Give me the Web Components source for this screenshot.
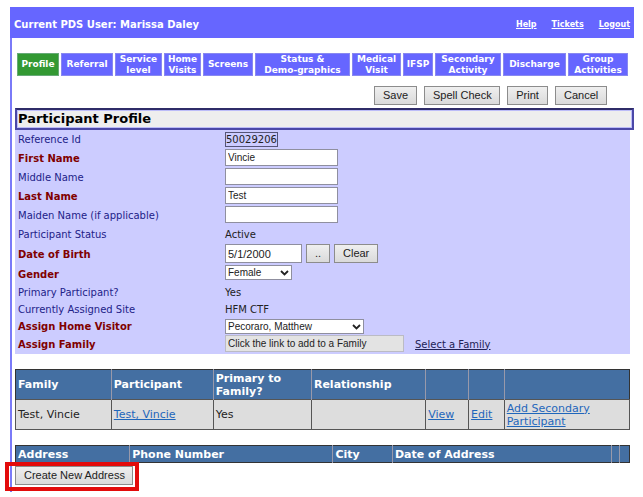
<!DOCTYPE html>
<html lang="en">
<head>
<meta charset="utf-8">
<title>Participant Profile</title>
<style>
  body { margin: 0; background: #fff; font-family: "DejaVu Sans", Verdana, sans-serif; font-size: 10px; color: #222; }
</style>
</head>
<body>
<pds-page></pds-page>

<script>
function define(name, html, setup) {
  const template = document.createElement('template');
  template.innerHTML = html;
  customElements.define(name, class extends HTMLElement {
    connectedCallback() {
      if (this.shadowRoot) return;
      const root = this.attachShadow({ mode: 'open' });
      root.append(template.content.cloneNode(true));
      if (setup) setup(this, root);
    }
  });
}

define('pds-header', `
  <style>
    :host { display: flex; align-items: center; justify-content: space-between; height: 31px; padding: 3px 4px 0; box-sizing: border-box; background: #6666ff; color: #fff; font-weight: bold; }
    nav { display: flex; gap: 15px; font-size: 8px; }
    a { color: inherit; }
  </style>
  <slot></slot>
  <nav><a href="#help">Help</a><a href="#tickets">Tickets</a><a href="#logout">Logout</a></nav>`);

define('pds-tabs', `
  <style>
    :host { display: grid; grid-template-columns: 42fr 52fr 47fr 37fr 50fr 95fr 49fr 30fr 66fr 63fr 60fr; gap: 2px; }
  </style>
  <slot></slot>`);

define('pds-tab', `
  <style>
    :host { display: block; min-width: 0; }
    a { display: flex; align-items: center; justify-content: center; height: 23px; box-sizing: border-box; border: 1px solid #8888f0; background: #6666ff; color: #fff; font-size: 9px; font-weight: bold; line-height: 11px; text-align: center; text-decoration: none; white-space: nowrap; }
    :host([current]) a { background: #339933; border-color: #66aa77; }
  </style>
  <a href="#"><span><slot></slot></span></a>`);

define('pds-button', `
  <style>
    :host { display: block; }
    button { display: block; width: 100%; height: 19px; box-sizing: border-box; margin: 0; padding: 0 8px; border: 1px solid #8c8c8c; border-radius: 0; background: linear-gradient(#efefef, #dadada); color: #222; font: 11px "Liberation Sans", Arial, sans-serif; line-height: 17px; white-space: nowrap; }
  </style>
  <button type="button"><slot></slot></button>`);

define('pds-title', `
  <style>
    :host { display: block; border: 2px solid #4b48a8; border-top-color: #2f2c68; background: #eeeeee; outline: 1px solid #bcbcf8; outline-offset: -3px; }
    h1 { margin: 0; padding: 0 1px; font-size: 13px; line-height: 18px; color: #000; }
  </style>
  <h1><slot></slot></h1>`);

define('pds-field', `
  <style>
    :host { display: grid; grid-template-columns: 207px 1fr; min-height: 19px; }
    :host([compact]) { min-height: 17px; }
    :host([tall]) { min-height: 20px; }
    label, .label { align-self: center; padding-left: 3px; padding-top: 1px; color: #222288; line-height: 14px; }
    :host([required]) label { color: #800000; font-weight: bold; }
    .value { display: flex; align-items: flex-start; gap: 4px; padding-left: 3px; }
    .static { align-self: center; line-height: 14px; }
    .ref { align-self: center; box-sizing: border-box; height: 15px; padding: 0; border: 1px solid #555577; line-height: 13px; }
    input, select { box-sizing: border-box; margin: 0; padding: 0 2px; border: 1px solid #8f8f9f; border-radius: 0; background: #fff; color: #222; font: 10px "Liberation Sans", Arial, sans-serif; height: 17px; }
    input { width: 113px; }
    input.date { width: 77px; height: 19px; font-size: 11px; }
    input:disabled { width: 179px; background: #e3e3e3; border-color: #bbbbc4; color: #222; }
    .pick { width: 24px; }
    .clear { width: 44px; }
    .select { display: grid; align-items: center; padding-top: 1px; }
    .select > * { grid-area: 1 / 1; }
    select { appearance: none; height: 15px; width: 67px; line-height: 13px; }
    select.wide { width: 139px; }
    svg { justify-self: end; margin-right: 3px; pointer-events: none; }
    a { color: #222255; padding-left: 7px; align-self: center; line-height: 14px; }
  </style>
  <label for="control"></label>
  <div class="value"></div>`,
  (host, root) => {
    const type = host.getAttribute('type') || 'static';
    const value = host.getAttribute('value') || '';
    const arrow = '<svg width="9" height="6" viewBox="0 0 9 6"><path d="M1 1l3.5 3.5L8 1" fill="none" stroke="#222" stroke-width="1.8"/></svg>';
    const kinds = {
      static: `<span class="static">${value}</span>`,
      reference: `<span class="ref">${value}</span>`,
      text: `<input id="control" type="text" value="${value}">`,
      date: `<input id="control" class="date" type="text" value="${value}"><pds-button class="pick">..</pds-button><pds-button class="clear">Clear</pds-button>`,
      select: `<span class="select"><select id="control" class="${host.hasAttribute('wide') ? 'wide' : ''}"><option>${value}</option></select>${arrow}</span>`,
      lookup: `<input id="control" type="text" disabled value="${value}"><a href="#family">Select a Family</a>`
    };
    root.querySelector('.value').innerHTML = kinds[type];
    const label = root.querySelector('label');
    label.textContent = host.getAttribute('label');
    if (type === 'static' || type === 'reference') {
      const span = document.createElement('span');
      span.className = 'label';
      span.textContent = label.textContent;
      label.replaceWith(span);
    }
  });

const tableStyle = `
    :host { display: block; }
    table { width: 100%; table-layout: fixed; border-collapse: collapse; border: 1px solid #333; font-size: 11px; line-height: 13px; }
    th, td { padding: 0 2px; text-align: left; vertical-align: middle; }
    th { background: #446fa2; color: #fff; border-left: 1px solid #99a; }
    th:first-child { border-left-color: #333; }
    td { background: #dddddd; border: 1px solid #555; }
    a { color: #1f66bb; }
    th:empty, td:empty { padding: 0; }`;

define('pds-family-table', `
  <style>${tableStyle}
    tr { height: 30px; }
  </style>
  <table>
    <colgroup><col style="width:15.6%"><col style="width:16.6%"><col style="width:16%"><col style="width:18.6%"><col style="width:7%"><col style="width:5.8%"><col></colgroup>
    <thead><tr><th>Family</th><th>Participant</th><th>Primary to Family?</th><th>Relationship</th><th></th><th></th><th></th></tr></thead>
    <tbody><tr><td>Test, Vincie</td><td><a href="#participant">Test, Vincie</a></td><td>Yes</td><td></td><td><a href="#view">View</a></td><td><a href="#edit">Edit</a></td><td><a href="#add">Add Secondary<br>Participant</a></td></tr></tbody>
  </table>`);

define('pds-address-table', `
  <style>${tableStyle}
    tr { height: 17px; }
  </style>
  <table>
    <colgroup><col style="width:18.6%"><col style="width:33.1%"><col style="width:9.7%"><col><col style="width:8px"><col style="width:10px"></colgroup>
    <thead><tr><th>Address</th><th>Phone Number</th><th>City</th><th>Date of Address</th><th></th><th></th></tr></thead>
  </table>`);

define('pds-callout', `
  <style>
    :host { display: block; position: relative; width: max-content; }
    .frame { position: absolute; inset: -4px -6px -6px -10px; border: 4px solid #e30b0b; pointer-events: none; }
  </style>
  <slot></slot><div class="frame"></div>`);

define('pds-page', `
  <style>
    :host { display: block; padding: 7px 9px 5px 10px; }
    main { border-left: 2px solid #7a7af8; padding: 15px 0 7px 3px; }
    pds-tabs { margin: 0 6px 0 2px; }
    .actions { display: flex; justify-content: flex-end; gap: 7px; padding: 10px 27px 3px 0; }
    .panel { display: flex; flex-direction: column; margin-right: 4px; background: #ccccff; }
    pds-family-table { margin: 15px 4px 15px 0; }
    pds-address-table { margin: 0 4px 3px 0; }
    .save { width: 43px; } .spell { width: 76px; } .print { width: 41px; } .cancel { width: 52px; } .create { width: 118px; }
  </style>
  <pds-header>Current PDS User: Marissa Daley</pds-header>
  <main>
    <pds-tabs>
      <pds-tab current>Profile</pds-tab><pds-tab>Referral</pds-tab><pds-tab>Service<br>level</pds-tab><pds-tab>Home<br>Visits</pds-tab><pds-tab>Screens</pds-tab><pds-tab>Status &amp;<br>Demo-graphics</pds-tab><pds-tab>Medical<br>Visit</pds-tab><pds-tab>IFSP</pds-tab><pds-tab>Secondary<br>Activity</pds-tab><pds-tab>Discharge</pds-tab><pds-tab>Group<br>Activities</pds-tab>
    </pds-tabs>
    <div class="actions">
      <pds-button class="save">Save</pds-button><pds-button class="spell">Spell Check</pds-button><pds-button class="print">Print</pds-button><pds-button class="cancel">Cancel</pds-button>
    </div>
    <pds-title>Participant Profile</pds-title>
    <div class="panel">
      <pds-field label="Reference Id" type="reference" value="50029206"></pds-field>
      <pds-field label="First Name" type="text" value="Vincie" required></pds-field>
      <pds-field label="Middle Name" type="text"></pds-field>
      <pds-field label="Last Name" type="text" value="Test" required></pds-field>
      <pds-field label="Maiden Name (if applicable)" type="text"></pds-field>
      <pds-field label="Participant Status" value="Active"></pds-field>
      <pds-field label="Date of Birth" type="date" value="5/1/2000" required tall></pds-field>
      <pds-field label="Gender" type="select" value="Female" required tall></pds-field>
      <pds-field label="Primary Participant?" value="Yes" compact></pds-field>
      <pds-field label="Currently Assigned Site" value="HFM CTF" compact></pds-field>
      <pds-field label="Assign Home Visitor" type="select" wide value="Pecoraro, Matthew" required compact></pds-field>
      <pds-field label="Assign Family" type="lookup" value="Click the link to add to a Family" required></pds-field>
    </div>
    <pds-family-table></pds-family-table>
    <pds-address-table></pds-address-table>
    <pds-callout><pds-button class="create">Create New Address</pds-button></pds-callout>
  </main>`);
</script>
</body>
</html>
